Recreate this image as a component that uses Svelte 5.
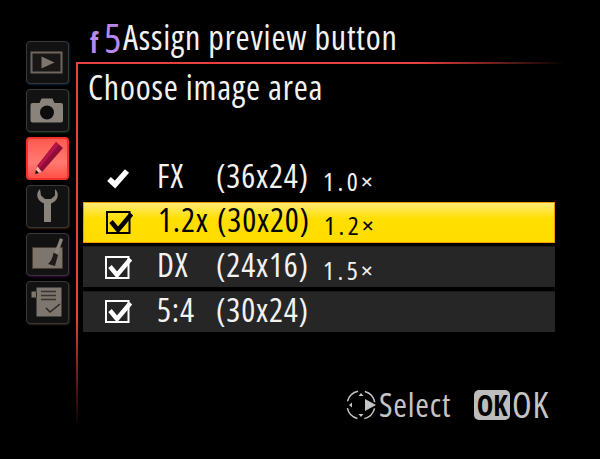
<script>
	const rows = [
		{ mark: 'check', name: 'FX', size: '(36x24)', crop: '1.0' },
		{ mark: 'box', name: '1.2x', size: '(30x20)', crop: '1.2', active: true },
		{ mark: 'box', name: 'DX', size: '(24x16)', crop: '1.5' },
		{ mark: 'box', name: '5:4', size: '(30x24)' }
	];
</script>

<div class="screen">
	<nav class="sidebar">
		<div class="tab tab-blue">
			<svg viewBox="0 0 40 40"><rect x="4.500" y="10.500" width="30" height="20" fill="#191715" stroke="#6f665f" stroke-width="2" /><path d="M14.500 14.500 27.500 20.500 14.500 26.500Z" fill="#7d756e" /></svg>
		</div>
		<div class="tab tab-green">
			<svg viewBox="0 0 40 40"><path d="M3.500 15q0-2 2-2h7l2-4.500h11l2 4.500h6.500q2 0 2 2v15.500q0 2-2 2h-28.500q-2 0-2-2Z" fill="#8a837c" /><circle cx="20" cy="22.500" r="7" fill="#0c0c0c" /></svg>
		</div>
		<div class="tab tab-on">
			<svg viewBox="0 0 40 40"><path d="M28 3 35 9 14 33 7 35 9 27Z" fill="#8e0e38" /><path d="M28 3 31 6 11 30 8 29Z" fill="#b81449" /><path d="M9 27 7 35 14 33Z" fill="#f7b7a4" /><path d="M8 31 7 35 11 34Z" fill="#1a0a0a" /></svg>
		</div>
		<div class="tab tab-orange">
			<svg viewBox="0 0 40 40"><path d="M13 3q-3.500 3-2.500 8 1 4 6.500 6.500V36h7V17.500q5.500-2.500 6.500-6.500 1-5-2.500-8v6.500l-4 3.500h-6l-4-3.500Z" fill="#8a837c" /></svg>
		</div>
		<div class="tab tab-purple">
			<svg viewBox="0 0 40 40"><rect x="5.500" y="13.500" width="30" height="21" fill="#7d766f" stroke="#4a3b2f" /><path d="M33 4 36 5.500 31 20 27.500 18.500Z" fill="#8a837c" /><path d="M26.500 18.500 31 21 28 32 21 30Q25.500 26 26.500 18.500Z" fill="#1f1b18" /></svg>
		</div>
		<div class="tab tab-brown">
			<svg viewBox="0 0 40 40"><path d="M4.500 9.500h5v-4h25v29H9.500v-19h-5Z" fill="#7d766f" /><path d="M9.500 9.500v6" stroke="#2a2522" /><path d="M14 9.500h15M14 13.500h15M14 17.500h15" stroke="#3a332e" stroke-width="1.500" /><path d="M19 26l4 4 10-8" fill="none" stroke="#2a2522" stroke-width="1.500" /></svg>
		</div>
	</nav>

	<main class="main">
		<header class="title">
			<span class="code"><small>f</small><b>5</b></span>
			<span class="text">Assign preview button</span>
		</header>
		<section class="panel">
			<h1>Choose image area</h1>
			<ul class="list">
				{#each rows as row}
					<li class="row" class:active={row.active} class:plain={row.mark === 'check'}>
						<span class="mark">
							{#if row.mark === 'box'}
								<svg viewBox="0 0 27 25" width="27" height="25">
									<rect x="1" y="2" width="22.500" height="21" fill="none" stroke="currentColor" stroke-width="2" />
									<path d="M5 11.500l7 8.500L25.500 4" fill="none" stroke="currentColor" stroke-width="4.500" />
								</svg>
							{:else}
								<svg viewBox="0 0 27 25" width="27" height="25">
									<path d="M4 13l6 5.500L22 5" fill="none" stroke="currentColor" stroke-width="5.500" />
								</svg>
							{/if}
						</span>
						<span class="name">{row.name}</span>
						<span class="size">{row.size}</span>
						{#if row.crop}
							<span class="crop">{row.crop}×</span>
						{/if}
					</li>
				{/each}
			</ul>
			<footer class="hints">
				<span class="hint">
					<svg viewBox="0 0 34 34" width="34" height="34">
						<circle cx="16" cy="17" r="14" fill="none" stroke="#c4c4c4" stroke-width="1.500" stroke-dasharray="15 7" stroke-dashoffset="-3.500" />
						<path d="M20 11 31 17 20 23Z" fill="#c4c4c4" />
						<path d="M16 5l-2.500 3h5ZM16 29l-2.500-3h5ZM4 17l3-2.500v5Z" fill="#c4c4c4" />
					</svg>
					Select
				</span>
				<span class="hint hint-ok">
					<span class="ok">OK</span>OK
				</span>
			</footer>
		</section>
	</main>
</div>

<style>
	:global(body) {
		background: #000;
	}

	.screen {
		display: flex;
		width: 600px;
		height: 459px;
		overflow: hidden;
		background: #000;
		font-family: 'Open Sans', 'Noto Sans', sans-serif;
		font-stretch: 75%;
		letter-spacing: 0.8px;
		color: #f2f2f2;
	}

	.sidebar {
		display: flex;
		flex-direction: column;
		gap: 5px;
		width: 50px;
		margin-left: 26px;
		padding-top: 41px;
	}

	.tab {
		box-sizing: border-box;
		width: 43px;
		height: 43px;
		border: 1.500px solid #383838;
		border-radius: 4px;
		background: #121212;
	}

	.tab svg {
		display: block;
		width: 40px;
		height: 40px;
	}

	.tab-blue { box-shadow: 1px 1px 2px #04203a; }
	.tab-green { box-shadow: 1px 1px 2px #06300f; }
	.tab-orange { box-shadow: 1px 1px 2px #3a1c04; }
	.tab-purple { box-shadow: 1px 1px 2px #32043a; }
	.tab-brown { box-shadow: 1px 1px 2px #2e2218; }

	.tab-on {
		border: 2px solid #f0302a;
		background: linear-gradient(#ff5a50, #ff7a70 60%, #ff5046);
	}

	.main {
		flex: 1;
		display: flex;
		flex-direction: column;
	}

	.title {
		display: flex;
		align-items: baseline;
		height: 62px;
		box-sizing: border-box;
		padding: 12px 0 0 14px;
		line-height: 46px;
	}

	.code {
		width: 33px;
		color: #b988ee;
		white-space: nowrap;
		letter-spacing: 0;
		transform: translateY(3px);
	}

	.code small {
		font-size: 28px;
		font-weight: 700;
		margin-right: 6px;
	}

	.code b {
		font-size: 40px;
		font-weight: 500;
	}

	.text {
		font-size: 34px;
		white-space: nowrap;
	}

	.panel {
		position: relative;
		flex: 1;
		padding: 5px 0 0 12px;
	}

	/* the red frame fades out at its far ends */
	.panel::before,
	.panel::after {
		content: '';
		position: absolute;
		left: 0;
		top: 0;
	}

	.panel::before {
		width: 490px;
		height: 2px;
		background: linear-gradient(to right, #e8403a 70%, #000);
	}

	.panel::after {
		width: 2px;
		height: 365px;
		background: linear-gradient(#e8403a 70%, #000);
	}

	h1 {
		margin: 0;
		font-size: 34px;
		font-weight: 400;
		line-height: 40px;
	}

	.list {
		list-style: none;
		margin: 52px 0 0 -5px;
		padding: 0;
		display: flex;
		flex-direction: column;
		gap: 3.500px;
		width: 472px;
	}

	.row {
		box-sizing: border-box;
		display: flex;
		align-items: center;
		height: 41px;
		background: #262626;
		border-top: 1px solid #1a1a1a;
		font-size: 33px;
		white-space: nowrap;
	}

	.row.plain {
		background: none;
		border: 0;
		height: 38px;
		margin-bottom: 1px;
	}

	.row.active {
		background: linear-gradient(#ffeb78, #ffdf00 40%, #ffdc00);
		border: 1px solid #f09a00;
		color: #000;
	}

	.mark {
		display: flex;
		width: 74px;
		padding-left: 22px;
		box-sizing: border-box;
		color: #fff;
	}

	.active .mark {
		color: #000;
	}

	.name {
		width: 59px;
		margin-bottom: 5px;
	}

	.size {
		width: 107px;
		margin-bottom: 5px;
	}

	.crop {
		font-size: 26px;
		letter-spacing: 3.500px;
		padding-top: 6px;
	}

	.hints {
		position: absolute;
		left: 269px;
		top: 318px;
		display: flex;
		gap: 23px;
		font-size: 33px;
		color: #c4c4c4;
	}

	.hint {
		display: flex;
		align-items: center;
	}

	.hint-ok {
		font-size: 36px;
	}

	.ok {
		display: inline-block;
		box-sizing: border-box;
		width: 36px;
		height: 30px;
		margin-right: 2px;
		text-align: center;
		background: #bdbdbd;
		color: #000;
		border-radius: 5px;
		font-weight: 700;
		font-size: 28px;
		line-height: 30px;
		letter-spacing: 0;
	}
</style>
